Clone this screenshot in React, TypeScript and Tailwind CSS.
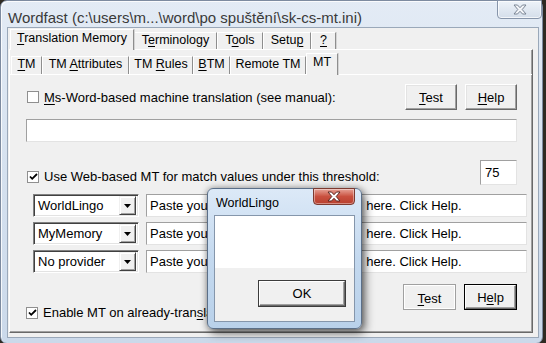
import React from "react";

type TabDef = { label: React.ReactNode; w: string; active?: boolean };

const U = ({ children }: { children: React.ReactNode }) => (
  <span className="underline decoration-1 underline-offset-[2px]">{children}</span>
);

function TabStrip({ tabs, activeH, idleH }: { tabs: TabDef[]; activeH: string; idleH: string }) {
  return (
    <div className="flex items-end text-[12.5px]">
      {tabs.map((t, i) => (
        <div
          key={i}
          className={`${t.w} flex items-start justify-center border-l border-t border-r border-l-white border-t-white border-r-[#8e8e8e] shadow-[1px_0_0_#d4d4d4] bg-[#f0f0f0] ${
            t.active ? `${activeH} relative z-10 -mb-px pt-[2px]` : `${idleH} pt-[1px]`
          }`}
        >
          {t.label}
        </div>
      ))}
    </div>
  );
}

const Checkbox = ({ checked }: { checked?: boolean }) => (
  <div className="w-[12px] h-[12px] shrink-0 bg-white border border-[#8f8f8f] flex items-center justify-center">
    {checked && (
      <svg width="9" height="8" viewBox="0 0 9 8">
        <path d="M1 3.5 L3.2 5.8 L8 1" fill="none" stroke="#000" strokeWidth="1.8" />
      </svg>
    )}
  </div>
);

const Button = ({ children, kind }: { children: React.ReactNode; kind?: "default" | "flat" }) => {
  if (kind === "default")
    return (
      <div className="w-[53px] h-[26px] border border-black">
        <div className="w-full h-full flex items-center justify-center border border-t-white border-l-white border-r-[#696969] border-b-[#696969] shadow-[inset_-1px_-1px_0_#a0a0a0] bg-[#f0f0f0]">
          {children}
        </div>
      </div>
    );
  if (kind === "flat")
    return (
      <div className="w-[53px] h-[26px] flex items-center justify-center border border-[#a0a0a0] shadow-[inset_1px_1px_0_#ffffff,inset_-1px_-1px_0_#ffffff] bg-[#f0f0f0] pt-[2px]">
        {children}
      </div>
    );
  return (
    <div className="w-[52px] h-[26px] flex items-center justify-center border border-t-white border-l-white border-r-[#696969] border-b-[#696969] shadow-[inset_-1px_-1px_0_#a0a0a0,inset_1px_1px_0_#e3e3e3] bg-[#f0f0f0]">
      {children}
    </div>
  );
};

const Field = ({ className, children }: { className: string; children?: React.ReactNode }) => (
  <div
    className={`${className} bg-white border border-t-[#a0a0a0] border-l-[#a0a0a0] border-b-[#e3e3e3] border-r-[#e3e3e3] flex items-center overflow-hidden whitespace-nowrap`}
  >
    {children}
  </div>
);

const Combo = ({ value }: { value: string }) => (
  <div className="w-[106px] h-[23px] shrink-0 bg-white border border-t-[#808080] border-l-[#808080] border-b-white border-r-white shadow-[inset_1px_1px_0_#404040,inset_-1px_-1px_0_#e3e3e3] flex items-center pl-[4px] pr-[2px]">
    <span className="flex-1">{value}</span>
    <div className="w-[17px] h-[19px] flex items-center justify-center bg-[#f0f0f0] border border-t-[#f0f0f0] border-l-[#f0f0f0] border-r-[#404040] border-b-[#404040] shadow-[inset_1px_1px_0_#ffffff,inset_-1px_-1px_0_#a0a0a0]">
      <svg width="7" height="4" viewBox="0 0 7 4">
        <path d="M0 0 H7 L3.5 4 Z" fill="#000" />
      </svg>
    </div>
  </div>
);

const rows = ["WorldLingo", "MyMemory", "No provider"];

export default function App() {
  return (
    <div className="w-[546px] h-[343px] relative overflow-hidden bg-[#2e2a22] font-['Liberation_Sans',Arial,sans-serif] text-[13px] text-black leading-none">
      {/* main window */}
      <div className="w-[543px] h-[344px] rounded-[7px] border border-[#7d8ba0] bg-gradient-to-b from-[#e3ebf5] via-[#d5e1ef] to-[#cbd9ea] flex flex-col shadow-[inset_1px_1px_0_rgba(255,255,255,0.8)]">
        <div className="h-[26px] shrink-0 flex items-start justify-between">
          <div className="pl-[7px] pt-[9px] text-[15px] text-[#3a3a3a] whitespace-nowrap">
            Wordfast (c:\users\m...\word\po spuštění\sk-cs-mt.ini)
          </div>
          <div className="w-[45px] h-[19px] -mt-px rounded-b-[4px] border border-[#8795aa] bg-gradient-to-b from-[#eef3f9] to-[#d4deea] flex items-center justify-center shadow-[inset_0_0_0_1px_rgba(255,255,255,0.7)]">
            <svg width="14" height="11" viewBox="0 0 14 11">
              <path
                d="M1 1 H4.5 L7 3.7 L9.5 1 H13 L9.2 5.5 L13 10 H9.5 L7 7.3 L4.5 10 H1 L4.8 5.5 Z"
                fill="#f4f6f9"
                stroke="#7a8594"
                strokeWidth="1"
                strokeLinejoin="round"
              />
            </svg>
          </div>
        </div>

        {/* client area */}
        <div className="ml-[6px] mr-[3px] mb-[5px] flex-1 bg-[#f0f0f0] border border-[#9aa8b9] pt-[1px] pl-[1px] flex flex-col">
          <div className="pl-[1px]">
            <TabStrip
              activeH="h-[21px]"
              idleH="h-[17px]"
              tabs={[
                { label: <span><U>T</U>ranslation Memory</span>, w: "w-[124px]", active: true },
                { label: <span>T<U>e</U>rminology</span>, w: "w-[83px]" },
                { label: <span>T<U>o</U>ols</span>, w: "w-[46px]" },
                { label: <span>Setu<U>p</U></span>, w: "w-[48px]" },
                { label: <span><U>?</U></span>, w: "w-[25px]" },
              ]}
            />
          </div>
          <div className="h-[284px] mr-[5px] border border-t-white border-l-white border-r-[#696969] border-b-[#696969] shadow-[inset_-1px_-1px_0_#a0a0a0] flex flex-col pt-[3px]">
            <div className="pl-[1px]">
              <TabStrip
                activeH="h-[22px]"
                idleH="h-[18px]"
                tabs={[
                  { label: <span><U>T</U>M</span>, w: "w-[31px]" },
                  { label: <span>TM <U>A</U>ttributes</span>, w: "w-[87px]" },
                  { label: <span>TM <U>R</U>ules</span>, w: "w-[64px]" },
                  { label: <span><U>B</U>TM</span>, w: "w-[37px]" },
                  { label: <span>Remote TM</span>, w: "w-[76px]" },
                  { label: <span>MT</span>, w: "w-[32px]", active: true },
                ]}
              />
            </div>
            <div className="flex-1 border-t border-t-white flex flex-col">
              {/* MS Word MT */}
              <div className="mt-[9px] h-[26px] flex items-center">
                <div className="ml-[17px] flex items-center gap-[5px]">
                  <Checkbox />
                  <span><U>M</U>s-Word-based machine translation (see manual):</span>
                </div>
                <div className="ml-auto mr-[15px] flex gap-[8px]">
                  <Button><span><U>T</U>est</span></Button>
                  <Button><span><U>H</U>elp</span></Button>
                </div>
              </div>
              <Field className="mt-[9px] ml-[16px] mr-[15px] h-[23px]" />

              {/* Web MT */}
              <div className="mt-[18px] h-[25px] flex items-start">
                <div className="ml-[17px] mt-[10px] flex items-center gap-[5px]">
                  <Checkbox checked />
                  <span>Use Web-based MT for match values under this threshold:</span>
                </div>
                <Field className="ml-auto mr-[15px] w-[37px] h-[25px] pl-[4px] items-start pt-[5px]">75</Field>
              </div>

              <div className="mt-[9px] flex flex-col gap-[5px]">
                {rows.map((r) => (
                  <div key={r} className="flex gap-[7px] ml-[23px] mr-[5px]">
                    <Combo value={r} />
                    <Field className="flex-1 h-[23px] pl-[3px]">
                      <span>Paste your</span>
                      <span className="ml-[154px]">here. Click Help.</span>
                    </Field>
                  </div>
                ))}
              </div>

              <div className="mt-[11px] flex items-start">
                <div className="ml-[16px] mt-[22px] flex items-center gap-[5px]">
                  <Checkbox checked />
                  <span>Enable MT on already-tran<U>s</U>lated segments</span>
                </div>
                <div className="ml-auto mr-[15px] flex gap-[8px]">
                  <Button kind="flat"><span><U>T</U>est</span></Button>
                  <Button kind="default"><span>H<U>e</U>lp</span></Button>
                </div>
              </div>
            </div>
          </div>
        </div>
      </div>

      {/* WorldLingo message box */}
      <div className="absolute left-[207px] top-[188px] w-[155px] h-[141px] rounded-[6px] border border-[#5b6f88] bg-gradient-to-b from-[#dce9f7] via-[#c4d9ef] to-[#b9d1ea] shadow-[3px_4px_10px_rgba(0,0,0,0.55),0_0_6px_rgba(0,0,0,0.3)] flex flex-col">
        <div className="h-[26px] shrink-0 flex items-start justify-between">
          <div className="pl-[8px] pt-[8px] text-[12.5px] text-black">WorldLingo</div>
          <div className="w-[42px] h-[17px] mr-[6px] -mt-px rounded-b-[4px] border border-[#7d3a30] bg-gradient-to-b from-[#e6a297] via-[#c9503f] to-[#b8402f] flex items-center justify-center shadow-[inset_0_0_0_1px_rgba(255,255,255,0.4)]">
            <svg width="14" height="11" viewBox="0 0 14 11">
              <path
                d="M1 1 H4.5 L7 3.7 L9.5 1 H13 L9.2 5.5 L13 10 H9.5 L7 7.3 L4.5 10 H1 L4.8 5.5 Z"
                fill="#ffffff"
                stroke="#5a2620"
                strokeWidth="1"
                strokeLinejoin="round"
              />
            </svg>
          </div>
        </div>
        <div className="mx-[6px] mb-[6px] flex-1 border border-[#8596ab] bg-[#f0f0f0] flex flex-col">
          <div className="h-[52px] bg-white" />
          <div className="flex-1 flex justify-end items-start pr-[8px] pt-[12px]">
            <div className="w-[88px] h-[27px] border border-[#3c3c3c]">
              <div className="w-full h-full flex items-center justify-center border border-t-white border-l-white border-r-[#696969] border-b-[#696969] shadow-[inset_-1px_-1px_0_#a0a0a0] bg-[#f0f0f0]">
                OK
              </div>
            </div>
          </div>
        </div>
      </div>
    </div>
  );
}
